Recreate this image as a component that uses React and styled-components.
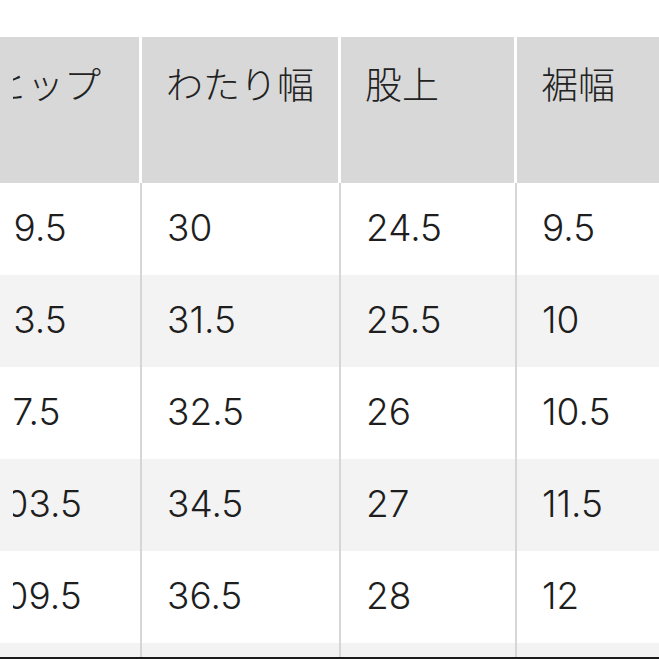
import React from "react";
import styled, { createGlobalStyle } from "styled-components";

const GlobalStyle = createGlobalStyle`
  html, body { margin: 0; padding: 0; background: #fff; }
  body { font-family: Inter, "Noto Sans CJK JP", sans-serif; color: #222; }
`;

const Page = styled.div`
  width: 659px;
  height: 659px;
  box-sizing: border-box;
  padding-top: 37px;
  overflow: hidden;
  background: #fff;
  border-bottom: 2px solid #1b1b1b;
`;

const Table = styled.div`
  display: flex;
  align-items: flex-start;
`;

const rows = `146px repeat(6, 92px)`;

const StickyColumn = styled.div`
  flex: none;
  width: 13px;
  display: grid;
  grid-template-rows: ${rows};
  overflow: hidden;
`;

const ScrollArea = styled.div`
  flex: 1;
  min-width: 0;
  overflow: hidden;
`;

const Grid = styled.div`
  display: grid;
  width: max-content;
  margin-left: -47px;
  grid-template-columns: 176px 199px 176px 176px;
  grid-template-rows: ${rows};
`;

const HeadCell = styled.div`
  box-sizing: border-box;
  background: #d8d8d8;
  border-right: 3px solid #fff;
  padding: 23px 0 0 24px;
  font-family: "Noto Sans CJK JP", sans-serif;
  font-size: 37px;
  font-weight: 300;
  line-height: 46px;
  color: #222;
  white-space: nowrap;
`;

const BodyCell = styled.div`
  box-sizing: border-box;
  background: ${(p) => (p.$shade ? "#f3f3f3" : "#ffffff")};
  border-right: 2px solid #d6d6d6;
  display: flex;
  align-items: center;
  padding: 0 0 3px 25px;
  font-family: Inter, "Noto Sans CJK JP", sans-serif;
  font-size: 37px;
  font-weight: 300;
  line-height: 46px;
  color: #1e1e1e;
  white-space: nowrap;
`;

const headers = ["ヒップ", "わたり幅", "股上", "裾幅"];
const data = [
  ["89.5", "30", "24.5", "9.5"],
  ["93.5", "31.5", "25.5", "10"],
  ["97.5", "32.5", "26", "10.5"],
  ["103.5", "34.5", "27", "11.5"],
  ["109.5", "36.5", "28", "12"],
  ["115.5", "38.5", "29", "12.5"],
];

export default function App() {
  return (
    <>
      <GlobalStyle />
      <Page>
        <Table>
          <StickyColumn>
            <HeadCell />
            {data.map((_, i) => (
              <BodyCell key={i} $shade={i % 2 === 1} />
            ))}
          </StickyColumn>
          <ScrollArea>
            <Grid>
              {headers.map((h) => (
                <HeadCell key={h}>{h}</HeadCell>
              ))}
              {data.map((row, i) =>
                row.map((v, j) => (
                  <BodyCell key={`${i}-${j}`} $shade={i % 2 === 1}>
                    {v}
                  </BodyCell>
                ))
              )}
            </Grid>
          </ScrollArea>
        </Table>
      </Page>
    </>
  );
}
